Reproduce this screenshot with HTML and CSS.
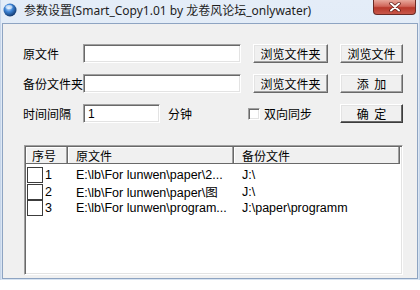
FILE: index.html
```html
<!DOCTYPE html>
<html>
  <head>
    <title>参数设置</title>
    <link rel="stylesheet" href="styles.css">
  </head>
  <body>
    <div class="window">
      <div class="titlebar">
        <svg class="app-icon" width="14" height="14" viewBox="0 0 14 14">
          <defs>
            <radialGradient id="ball" cx="40%" cy="35%" r="65%">
              <stop offset="0" stop-color="#cfe6ff" />
              <stop offset="0.45" stop-color="#3f86d8" />
              <stop offset="1" stop-color="#12396f" />
            </radialGradient>
          </defs>
          <circle cx="7" cy="7" r="6.5" fill="url(#ball)" />
          <ellipse cx="6" cy="4" rx="3.5" ry="2" fill="#fff" opacity="0.55" />
        </svg>
        <span class="title">参数设置(Smart_Copy1.01 by 龙卷风论坛_onlywater)</span>
        <div class="close-btn">
          <svg width="14" height="10" viewBox="0 0 14 10">
            <path d="M3 1.5 L11 8.5 M11 1.5 L3 8.5" stroke="#5a1a14" stroke-width="3.4" stroke-linecap="round" />
            <path d="M3 1.5 L11 8.5 M11 1.5 L3 8.5" stroke="#fff" stroke-width="2" stroke-linecap="round" />
          </svg>
        </div>
      </div>
      <div class="client">
        <div class="form">
          <label class="lbl">原文件</label>
          <div class="edit"></div>
          <div></div>
          <button class="btn">浏览文件夹</button>
          <div></div>
          <button class="btn">浏览文件</button>

          <label class="lbl">备份文件夹</label>
          <div class="edit"></div>
          <div></div>
          <button class="btn">浏览文件夹</button>
          <div></div>
          <button class="btn btn-spaced">添 加</button>

          <label class="lbl">时间间隔</label>
          <div class="interval">
            <div class="edit edit-short">1</div>
            <span>分钟</span>
          </div>
          <div></div>
          <label class="check">
            <span class="check-box"></span>
            双向同步
          </label>
          <div></div>
          <button class="btn btn-default btn-spaced">确 定</button>
        </div>

        <div class="listbox">
          <div class="list-head">
            <div class="col col-no">序号</div>
            <div class="col col-src">原文件</div>
            <div class="col col-dst">备份文件</div>
          </div>
          <div class="list-row">
            <div class="cell-no"><span class="state"></span>1</div>
            <div class="cell-src">E:\lb\For lunwen\paper\2...</div>
            <div class="cell-dst">J:\</div>
          </div>
          <div class="list-row">
            <div class="cell-no"><span class="state"></span>2</div>
            <div class="cell-src">E:\lb\For lunwen\paper\图</div>
            <div class="cell-dst">J:\</div>
          </div>
          <div class="list-row">
            <div class="cell-no"><span class="state"></span>3</div>
            <div class="cell-src">E:\lb\For lunwen\program...</div>
            <div class="cell-dst">J:\paper\programm</div>
          </div>
        </div>
      </div>
    </div>
  </body>
</html>
```

FILE: styles.css
```css
html,
body {
  margin: 0;
  padding: 0;
  background: #fff;
}
body {
  font-family: "Noto Sans CJK SC", "Liberation Sans", sans-serif;
  font-size: 12px;
  color: #000;
}
.window {
  width: 420px;
  height: 280px;
  box-sizing: border-box;
  background: linear-gradient(#e4edf8, #d8e4f2);
  border-left: 1px solid #c7d6ea;
  border-right: 1px solid #c7d6ea;
  display: flex;
  flex-direction: column;
}
.titlebar {
  height: 23px;
  flex-shrink: 0;
  display: flex;
  align-items: flex-start;
  padding-left: 2px;
}
.app-icon {
  margin-top: 3px;
  flex-shrink: 0;
}
.title {
  margin-left: 7px;
  margin-top: 3px;
  font-family: "Noto Sans", "Noto Sans CJK SC", sans-serif;
  font-size: 12px;
  line-height: 16px;
  color: #1e1e1e;
  white-space: nowrap;
}
.close-btn {
  margin-left: auto;
  margin-right: 3px;
  width: 43px;
  height: 15px;
  box-sizing: border-box;
  border: 1px solid #6b2a24;
  border-top: none;
  border-radius: 0 0 4px 4px;
  background: linear-gradient(#e8a89c, #d0665a 45%, #b8382b 55%, #c8584a);
  display: flex;
  align-items: center;
  justify-content: center;
}
.client {
  flex: 1;
  margin: 0 1px 1px 1px;
  border: 1px solid #8ea4c2;
  background: #f0f0f0;
  padding: 20px 0 0 20px;
  box-sizing: border-box;
}
.form {
  display: grid;
  grid-template-columns: 60px 158px 12px 75px 12px 63px;
  grid-template-rows: 19px 19px 19px;
  row-gap: 11px;
  align-items: center;
}
.lbl {
  white-space: nowrap;
  line-height: 19px;
}
.edit {
  height: 19px;
  box-sizing: border-box;
  background: #fff;
  border: 1px solid;
  border-color: #a0a0a0 #fff #fff #a0a0a0;
  box-shadow: inset 1px 1px #696969, inset -1px -1px #e3e3e3;
  padding: 2px 4px;
  font-family: "Liberation Sans", sans-serif;
  font-size: 12px;
  line-height: 15px;
}
.interval {
  display: flex;
  align-items: center;
  gap: 8px;
}
.edit-short {
  width: 77px;
}
.btn {
  height: 19px;
  padding: 0;
  margin: 0;
  box-sizing: border-box;
  background: #f0f0f0;
  border: 1px solid;
  border-color: #fff #696969 #696969 #fff;
  box-shadow: inset -1px -1px #a0a0a0, inset 1px 1px #e3e3e3;
  font-family: "Noto Sans CJK SC", sans-serif;
  font-size: 12px;
  line-height: 16px;
  color: #000;
}
.btn-spaced {
  word-spacing: 3px;
}
.btn-default {
  border-color: #fff #3c3c3c #3c3c3c #fff;
  box-shadow: inset -1px -1px #696969, inset 1px 1px #e3e3e3;
}
.check {
  display: flex;
  align-items: center;
  gap: 4px;
  margin-left: -5px;
  white-space: nowrap;
}
.check-box {
  width: 12px;
  height: 12px;
  box-sizing: border-box;
  background: #fff;
  border: 1px solid;
  border-color: #a0a0a0 #fff #fff #a0a0a0;
  box-shadow: inset 1px 1px #696969, inset -1px -1px #e3e3e3;
}
.listbox {
  margin: 22px 0 0 1px;
  width: 379px;
  height: 130px;
  box-sizing: border-box;
  background: #fff;
  border: 1px solid;
  border-color: #a0a0a0 #fff #fff #a0a0a0;
  box-shadow: inset 1px 1px #696969, inset -1px -1px #e3e3e3;
  padding: 1px;
}
.list-head {
  display: flex;
  width: 374px;
  height: 17px;
  box-sizing: border-box;
  background: #f0f0f0;
  border-bottom: 1px solid #696969;
}
.col {
  box-sizing: border-box;
  height: 16px;
  line-height: 17px;
  border-right: 1px solid #696969;
  box-shadow: inset -1px 0 #a0a0a0, inset 1px 1px #fff;
  white-space: nowrap;
}
.col-no {
  width: 42px;
  padding-left: 6px;
}
.col-src {
  width: 166px;
  padding-left: 8px;
}
.col-dst {
  width: 166px;
  padding-left: 8px;
}
.list-head + .list-row {
  margin-top: 3px;
}
.list-row {
  display: flex;
  height: 16.5px;
  align-items: center;
  font-family: "Liberation Sans", "Noto Sans CJK SC", sans-serif;
  font-size: 12.5px;
  white-space: nowrap;
}
.cell-no {
  width: 42px;
  display: flex;
  align-items: center;
  gap: 2px;
  padding-left: 1px;
  box-sizing: border-box;
}
.state {
  width: 16px;
  height: 16px;
  box-sizing: border-box;
  border: 1px solid #3c3c3c;
  background: #fff;
}
.cell-src {
  width: 166px;
  padding-left: 8px;
  box-sizing: border-box;
}
.cell-dst {
  padding-left: 8px;
}
```
